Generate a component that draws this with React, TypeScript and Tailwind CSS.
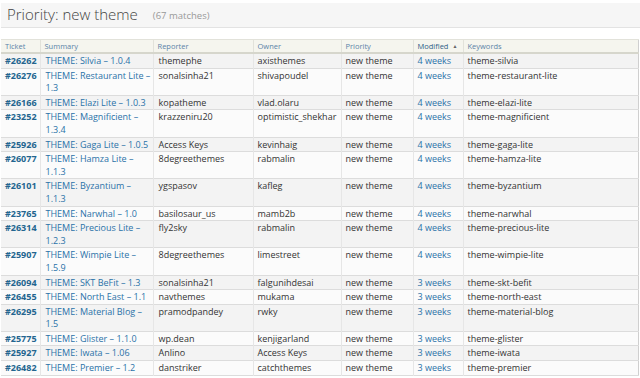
import React from "react";

type Row = [string, string, string, string, string, string];

const rows: Row[] = [
  ["#26262", "THEME: Silvia – 1.0.4", "themephe", "axisthemes", "4 weeks", "theme-silvia"],
  ["#26276", "THEME: Restaurant Lite – 1.3", "sonalsinha21", "shivapoudel", "4 weeks", "theme-restaurant-lite"],
  ["#26166", "THEME: Elazi Lite – 1.0.3", "kopatheme", "vlad.olaru", "4 weeks", "theme-elazi-lite"],
  ["#23252", "THEME: Magnificient – 1.3.4", "krazzeniru20", "optimistic_shekhar", "4 weeks", "theme-magnificient"],
  ["#25926", "THEME: Gaga Lite – 1.0.5", "Access Keys", "kevinhaig", "4 weeks", "theme-gaga-lite"],
  ["#26077", "THEME: Hamza Lite – 1.1.3", "8degreethemes", "rabmalin", "4 weeks", "theme-hamza-lite"],
  ["#26101", "THEME: Byzantium – 1.1.3", "ygspasov", "kafleg", "4 weeks", "theme-byzantium"],
  ["#23765", "THEME: Narwhal – 1.0", "basilosaur_us", "mamb2b", "4 weeks", "theme-narwhal"],
  ["#26314", "THEME: Precious Lite – 1.2.3", "fly2sky", "rabmalin", "4 weeks", "theme-precious-lite"],
  ["#25907", "THEME: Wimpie Lite – 1.5.9", "8degreethemes", "limestreet", "4 weeks", "theme-wimpie-lite"],
  ["#26094", "THEME: SKT BeFit – 1.3", "sonalsinha21", "falgunihdesai", "3 weeks", "theme-skt-befit"],
  ["#26455", "THEME: North East – 1.1", "navthemes", "mukama", "3 weeks", "theme-north-east"],
  ["#26295", "THEME: Material Blog – 1.5", "pramodpandey", "rwky", "3 weeks", "theme-material-blog"],
  ["#25775", "THEME: Glister – 1.1.0", "wp.dean", "kenjigarland", "3 weeks", "theme-glister"],
  ["#25927", "THEME: Iwata – 1.06", "Anlino", "Access Keys", "3 weeks", "theme-iwata"],
  ["#26482", "THEME: Premier – 1.2", "danstriker", "catchthemes", "3 weeks", "theme-premier"],
];

const headers = ["Ticket", "Summary", "Reporter", "Owner", "Priority", "Modified", "Keywords"];

export default function App() {
  return (
    <div
      className="w-[640px] h-[378px] overflow-hidden bg-white text-[#333]"
      style={{ fontFamily: '"Open Sans", "Liberation Sans", sans-serif' }}
    >
      <div className="mt-[3px] ml-[1px] h-[25px] bg-[#f6f6f6] border-b border-[#e3e3e3] flex items-end pl-[6px] pb-[4px]">
        <span className="text-[15px] font-light leading-[18px] text-[#444]">Priority: new theme</span>
        <span className="ml-[15px] text-[9.5px] leading-[15px] text-[#999]">(67 matches)</span>
      </div>
      <table className="mt-[11px] ml-[1px] w-[638px] table-fixed border-collapse border-r border-[#cfcfcf]">
        <colgroup>
          <col className="w-[39px]" />
          <col className="w-[113px]" />
          <col className="w-[100px]" />
          <col className="w-[88px]" />
          <col className="w-[72px]" />
          <col className="w-[50px]" />
          <col />
        </colgroup>
        <thead>
          <tr className="bg-[#f5f5ee] border-t border-[#e2e2da] border-b-2 border-b-[#d6d6cc]">
            {headers.map((h, i) => (
              <th
                key={h}
                className={`text-left font-normal text-[7.5px] leading-[11px] pl-[4px] pt-px whitespace-nowrap ${
                  i > 0 ? "border-l border-[#e2e2da]" : ""
                } ${h === "Modified" ? "text-[#2d5f86]" : "text-[#5b84a8]"}`}
              >
                {h}
                {h === "Modified" && <span className="ml-[4px] text-[5px] align-[1px] text-[#666]">▲</span>}
              </th>
            ))}
          </tr>
        </thead>
        <tbody>
          {rows.map((r, idx) => (
            <tr
              key={r[0]}
              className={`${idx % 2 === 0 ? "bg-[#f3f3f3]" : "bg-[#fbfbfb]"} border-b border-[#dcdcdc] align-top`}
            >
              <td className="pl-[4px] pt-px text-[9px] leading-[12.6px] font-bold text-[#23658f] whitespace-nowrap">
                {r[0]}
              </td>
              <td className="pl-[5px] pr-[2px] pt-px text-[9px] leading-[12.6px] text-[#2a72a8] border-l border-[#e6e6e6]">
                {r[1]}
              </td>
              <td className="pl-[5px] pt-px text-[9px] leading-[12.6px] border-l border-[#e6e6e6] whitespace-nowrap">
                {r[2]}
              </td>
              <td className="pl-[4px] pt-px text-[9px] leading-[12.6px] border-l border-[#e6e6e6] whitespace-nowrap">
                {r[3]}
              </td>
              <td className="pl-[4px] pt-px text-[9px] leading-[12.6px] border-l border-[#e6e6e6] whitespace-nowrap">
                new theme
              </td>
              <td className="pl-[4px] pt-px text-[9px] leading-[12.6px] text-[#2a72a8] border-l border-[#e6e6e6] whitespace-nowrap">
                {r[4]}
              </td>
              <td className="pl-[4px] pt-px text-[9px] leading-[12.6px] border-l border-[#e6e6e6] whitespace-nowrap">
                {r[5]}
              </td>
            </tr>
          ))}
        </tbody>
      </table>
    </div>
  );
}
